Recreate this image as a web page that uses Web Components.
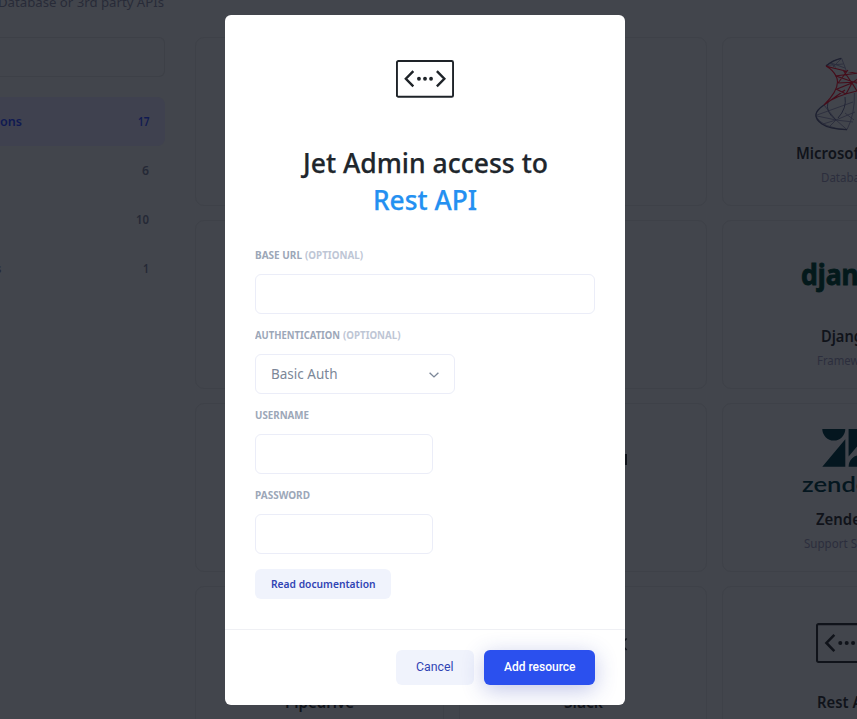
<!DOCTYPE html>
<html lang="en">
<head>
<meta charset="utf-8">
<title>Jet Admin</title>
<style>
html,body{margin:0;height:100%;overflow:hidden;background:#42454c}
body{font-family:"Noto Sans","Open Sans",sans-serif}
</style>
</head>
<body>
<jet-app></jet-app>
<script>
const define=(name,html,setup)=>{
  const t=document.createElement('template');
  t.innerHTML=html;
  customElements.define(name,class extends HTMLElement{
    connectedCallback(){
      if(this.shadowRoot)return;
      this.attachShadow({mode:'open'}).append(t.content.cloneNode(true));
      if(setup)setup(this,this.shadowRoot);
    }
  });
};

/* Single line of text condensed or expanded to the width in "w". */
define('fit-text',`<style>:host{display:inline-block;white-space:nowrap;flex:none;text-align:left}
span{display:inline-block;transform-origin:0 50%}</style><span><slot></slot></span>`,(el,root)=>{
  const w=+el.getAttribute('w'),s=root.querySelector('span');
  el.style.width=w+'px';
  const fit=()=>{s.style.transform='none';const n=s.offsetWidth?parseFloat(getComputedStyle(s).width):0;if(n)s.style.transform='scaleX('+w/n+')'};
  fit();
  requestAnimationFrame(fit);
});

define('rest-icon',`<style>:host{display:block}svg{display:block;width:100%;height:100%;overflow:visible}</style>
<svg viewBox="0 0 57.6 37.5" fill="none" stroke="currentColor" stroke-width="1.9">
<rect x=".95" y=".95" width="55.7" height="35.6" rx="1.4"/>
<path d="M17.2 11 9.8 18.6 17.2 26.2M40.6 11 48 18.6 40.6 26.2" stroke-width="2.4"/>
<g fill="currentColor" stroke="none"><circle cx="22.8" cy="18.6" r="1.9"/><circle cx="28.8" cy="18.6" r="1.9"/><circle cx="34.8" cy="18.6" r="1.9"/></g></svg>`);

define('sql-logo',`<style>:host,svg{display:block}</style>
<svg width="90" height="76" viewBox="0 0 90 76" fill="none">
<g stroke="#2b2e3d" stroke-width=".9"><path d="M24 9.5Q31 4 39.6 2.3L44.3 14.7M28 6.5 43 12M39.6 2.3 31 11M28 6.5 34 11.5M24 9.5 41 8"/>
<path d="M22 49Q13.6 54 13.6 60Q20 72 45 73.7Q53 58 52.4 37M15 59 51 46M22 49 34 64 53 56M34 64 15 60M34 64 21 68M34 64 45 73.7M34 64 51 66M28 70 34 64M43 57 52 64"/></g>
<path d="M22 49Q7 59 20 68Q27 73 45 73.7M24 10Q31 4 39 2.3" stroke="#1d2030" stroke-width="1.3"/>
<path d="M26 46Q23 56 34 64M43 41Q45 52 36 62" stroke="#222536"/>
<g stroke="#450d1a" stroke-width="1.1"><path d="M24 10Q40 15 74 21Q58 25 55 35Q32 40 22 49Q40 31 34 20Q31 14 24 10M33 20 57 17M34 20 60 29M36 27 46 14M35 33 50 27 55 35M41 14 50 27 61 19M36 27 55 26M34 33 44 38 50 27M22 49 43 34"/></g>
</svg>`);

define('django-logo',`<style>:host{display:flex;height:76px;align-items:flex-start;font:700 28.5px/40px "Noto Sans",sans-serif;color:#04191b;-webkit-text-stroke:.9px #04191b}fit-text{margin-top:15px}</style><fit-text w="91">django</fit-text>`);

define('zendesk-logo',`<style>:host{display:block;width:90px;height:76px;color:#04161f}svg{display:block;height:48px}
fit-text{font:600 21.5px/28px Lato,sans-serif}</style>
<svg width="90" height="48" fill="currentColor"><path d="M20.3 7H43.3A11.5 11.5 0 0 1 20.3 7M43.3 17.3V44.7H20.3zM46.6 7H69.6L46.6 34.4zM46.6 44.7A11.5 11.5 0 0 1 69.6 44.7z"/></svg><fit-text w="92">zendesk</fit-text>`);

define('resource-card',`<style>
:host{display:flex;flex-direction:column;align-items:center;box-sizing:border-box;height:168.5px;border:1px solid #3e4148;border-radius:9px;padding-top:18px}
.logo{height:76px;display:flex;align-items:center;justify-content:center}
.name{font-size:15.5px;line-height:24px;font-weight:600;color:#10131a;margin-top:9px;height:24px}
.kind{font-size:12px;line-height:18px;color:#2c2e3d;margin-top:4px;height:18px}
</style><div class="logo"><slot name="logo"></slot></div><div class="name"><slot></slot></div><div class="kind"><slot name="kind"></slot></div>`);

define('side-item',`<style>
:host{display:flex;align-items:center;justify-content:space-between;height:49px;box-sizing:border-box;padding:0 16px 2px 0;border-radius:0 8px 8px 0;color:#252936;font-size:13px;font-weight:600}
:host([active]){background:#3f414f;color:#101a52}
</style><span><slot></slot></span><slot name="count"></slot>`);

define('resource-page',`<style>
:host{display:flex;gap:30px;width:972px;height:719px;overflow:hidden}
aside{width:165px;flex:none}
.intro{display:flex;height:37px;font-size:13.2px;line-height:20px;color:#282b38}
.intro fit-text{margin:-8px 0 0 -2px}
.search{box-sizing:border-box;height:40px;border:1px solid #3d4047;border-left:0;border-radius:0 6px 6px 0;margin-bottom:20px}
main{display:grid;grid-template-columns:repeat(3,248.7px);grid-auto-rows:168.5px;gap:14.5px 15px;padding-top:37px;flex:none}
rest-icon{width:61.4px;height:40.2px;color:#10131a}
svg{display:block}
.tail{margin-left:-5px}
</style>
<aside><div class="intro"><fit-text w="166">Database or 3rd party APIs</fit-text></div><div class="search"></div>
<side-item active><fit-text w="22">ons</fit-text><fit-text slot="count" w="11.5">17</fit-text></side-item>
<side-item><fit-text slot="count" w="7">6</fit-text></side-item>
<side-item><fit-text slot="count" w="13">10</fit-text></side-item>
<side-item><fit-text class="tail" w="6.5">s</fit-text><fit-text slot="count" w="6">1</fit-text></side-item></aside>
<main>
<resource-card></resource-card><resource-card></resource-card>
<resource-card><sql-logo slot="logo"></sql-logo><fit-text w="101">Microsoft SQL</fit-text><fit-text slot="kind" w="51">Database</fit-text></resource-card>
<resource-card></resource-card><resource-card></resource-card>
<resource-card><django-logo slot="logo"></django-logo><fit-text w="51">Django</fit-text><fit-text slot="kind" w="60">Framework</fit-text></resource-card>
<resource-card></resource-card>
<resource-card><svg slot="logo" width="90" height="76" fill="#10131a"><path d="M79 32h10v11h-10z"/></svg></resource-card>
<resource-card><zendesk-logo slot="logo"></zendesk-logo><fit-text w="61">Zendesk</fit-text><fit-text slot="kind" w="86">Support System</fit-text></resource-card>
<resource-card><fit-text w="69">Pipedrive</fit-text></resource-card>
<resource-card><svg slot="logo" width="90" height="76" fill="none" stroke="#10131a" stroke-width="1.6"><path d="M88.6 33.5 83 39l5.6 6"/></svg><fit-text w="39">Slack</fit-text></resource-card>
<resource-card><rest-icon slot="logo"></rest-icon><fit-text w="60">Rest API</fit-text></resource-card>
</main>`);

define('form-field',`<style>
:host{display:flex;flex-direction:column;gap:11px;height:67px}
.label{display:flex;gap:2.5px;height:16px;font-size:10.6px;line-height:16px;font-weight:700;color:#9ca7b8}
::slotted([slot=hint]){color:#bec6d5}
.box{box-sizing:border-box;width:var(--box,178px);height:40px;border:1px solid #ebedf8;border-radius:6px;background:#fff;display:flex;align-items:center;justify-content:space-between;padding:0 15px 1px;color:#7c8798;font-size:13.7px}
</style><div class="label"><slot name="label"></slot><slot name="hint"></slot></div><div class="box"><slot></slot></div>`);

define('ui-button',`<style>
:host{display:flex;align-items:center;justify-content:center;box-sizing:border-box;padding-bottom:1px;border-radius:6px;background:#f0f3fc;color:#3044b4;cursor:pointer}
:host([primary]){background:#2b50ee;color:#fff;box-shadow:0 5px 22px rgba(50,65,180,.3)}
</style><slot></slot>`);

define('access-dialog',`<style>
:host{display:flex;flex-direction:column;box-sizing:border-box;width:400px;height:690px;border-radius:6px;background:#fff;overflow:hidden}
.body{height:614px;padding:44.6px 30px 0;box-sizing:border-box}
rest-icon{width:58px;height:37.8px;color:#1e2328;margin:0 auto 46.6px}
h1{margin:0 0 29px;height:74px;font-size:27px;line-height:37px;font-weight:500;color:#20262c;text-align:center;-webkit-text-stroke:.25px}
h1 div{height:37px}
h1 .api{color:#2490f1}
.fields{display:flex;flex-direction:column;gap:13px;margin-bottom:15px}
.wide{--box:340px}.mid{--box:200px}
.docs{width:136px;height:30px;font-size:10.8px;font-weight:600}
footer{height:76px;box-sizing:border-box;border-top:1px solid #eff0f4;display:flex;justify-content:flex-end;gap:10px;padding:20px 30px 0;font-family:Roboto,"Liberation Sans",sans-serif;font-size:12px}
footer ui-button{height:35px}
.cancel{width:78px}.add{width:111px;font-weight:500}
.chev{margin-top:4px}
</style>
<div class="body"><rest-icon></rest-icon>
<h1><div><fit-text w="245">Jet Admin access to</fit-text></div><div class="api"><fit-text w="104">Rest API</fit-text></div></h1>
<div class="fields">
<form-field class="wide"><fit-text slot="label" w="47">BASE URL</fit-text><fit-text slot="hint" w="58">(OPTIONAL)</fit-text></form-field>
<form-field class="mid"><fit-text slot="label" w="85">AUTHENTICATION</fit-text><fit-text slot="hint" w="57.5">(OPTIONAL)</fit-text>
<fit-text w="66.5">Basic Auth</fit-text><svg class="chev" width="10" height="6" fill="none" stroke="#7c8798" stroke-width="1.4"><path d="M.6.7 5 4.9 9.4.7"/></svg></form-field>
<form-field><fit-text slot="label" w="54">USERNAME</fit-text></form-field>
<form-field><fit-text slot="label" w="55">PASSWORD</fit-text></form-field>
</div>
<ui-button class="docs"><fit-text w="104.5">Read documentation</fit-text></ui-button></div>
<footer><ui-button class="cancel"><fit-text w="37.5">Cancel</fit-text></ui-button><ui-button class="add" primary><fit-text w="71.5">Add resource</fit-text></ui-button></footer>`);

define('jet-app',`<style>
:host{display:grid;width:857px;height:719px;overflow:hidden}
resource-page,access-dialog{grid-area:1/1}
access-dialog{margin:15px 0 0 225px;z-index:1}
</style><resource-page></resource-page><access-dialog></access-dialog>`);
</script>
</body>
</html>
